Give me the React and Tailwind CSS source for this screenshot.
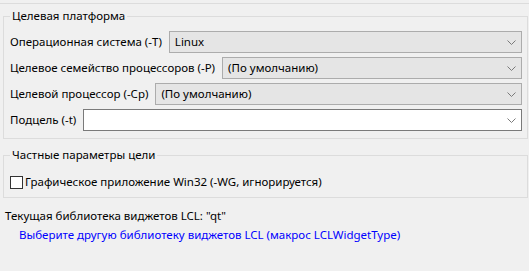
import React from 'react';

// Small dropdown chevron, like the Win10 combo box arrow
const Chevron = () => (
  <svg width="9" height="5" viewBox="0 0 9 5" className="shrink-0">
    <polyline points="0.5,0.5 4.5,4.5 8.5,0.5" fill="none" stroke="#7a7a7a" strokeWidth="1" />
  </svg>
);

const Combo = ({ value, editable = false }) => (
  <div
    className={`flex-1 h-[22px] flex items-center justify-between pl-[5px] pr-[5px] border ${
      editable ? 'bg-white border-[#7a7a7a]' : 'bg-[#e5e5e5] border-[#acacac]'
    }`}
  >
    <span className="leading-none">{value}</span>
    <Chevron />
  </div>
);

const Row = ({ label, value, editable }) => (
  <div className="flex items-center gap-[7px]">
    <span className="whitespace-nowrap">{label}</span>
    <Combo value={value} editable={editable} />
  </div>
);

// Group box: caption sits over the top border line
const GroupBox = ({ title, className = '', children }) => (
  <div className={`relative ml-[3px] mr-[1px] border border-[#dcdcdc] pl-[6px] pr-[5px] ${className}`}>
    <span className="absolute left-[6px] top-[-9px] px-[2px] leading-[16px] bg-[#f0f0f0]">{title}</span>
    {children}
  </div>
);

export default function App() {
  return (
    <div className="w-[529px] h-[271px] overflow-hidden bg-[#f0f0f0] text-black text-[11.5px] font-['Noto_Sans',sans-serif] pt-[3px]">
      <div className="border-t border-[#dcdcdc]" />

      <GroupBox title="Целевая платформа" className="mt-[12px] pt-[14px] pb-[7px]">
        <div className="flex flex-col gap-[4px]">
          <Row label="Операционная система (-T)" value="Linux" />
          <Row label="Целевое семейство процессоров (-P)" value="(По умолчанию)" />
          <Row label="Целевой процессор (-Cp)" value="(По умолчанию)" />
          <Row label="Подцель (-t)" value="" editable />
        </div>
      </GroupBox>

      <GroupBox title="Частные параметры цели" className="mt-[16px] pt-[18px] pb-[7px]">
        <div className="flex items-center gap-[2px] h-[16px]">
          <span className="w-[13px] h-[13px] border border-[#333333] bg-white" />
          <span className="leading-[16px]">Графическое приложение Win32 (-WG, игнорируется)</span>
        </div>
      </GroupBox>

      <div className="mt-[9px] pl-[5px] leading-[18px]">Текущая библиотека виджетов LCL: "qt"</div>
      <div className="pl-[19px] leading-[19px] text-[#0000ff]">
        Выберите другую библиотеку виджетов LCL (макрос LCLWidgetType)
      </div>
    </div>
  );
}
